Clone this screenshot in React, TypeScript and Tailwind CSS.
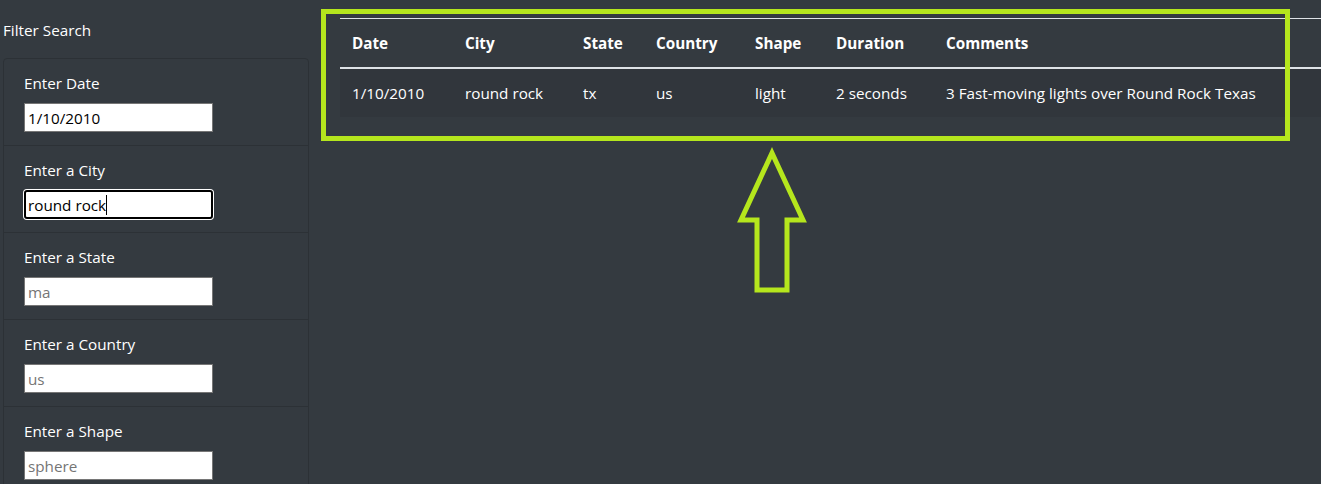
import React from "react";

const font = { fontFamily: '"Open Sans", "Noto Sans", sans-serif' };

const fields = [
  { label: "Enter Date", value: "1/10/2010", placeholder: "" },
  { label: "Enter a City", value: "round rock", placeholder: "", focused: true },
  { label: "Enter a State", value: "", placeholder: "ma" },
  { label: "Enter a Country", value: "", placeholder: "us" },
  { label: "Enter a Shape", value: "", placeholder: "sphere" },
];

const cols = [
  { h: "Date", v: "1/10/2010", w: "w-[113px]" },
  { h: "City", v: "round rock", w: "w-[118px]" },
  { h: "State", v: "tx", w: "w-[73px]" },
  { h: "Country", v: "us", w: "w-[99px]" },
  { h: "Shape", v: "light", w: "w-[81px]" },
  { h: "Duration", v: "2 seconds", w: "w-[110px]" },
  { h: "Comments", v: "3 Fast-moving lights over Round Rock Texas", w: "" },
];

export default function App() {
  return (
    <div
      className="relative w-[1321px] h-[484px] overflow-hidden bg-[#343a40] text-white text-[15.25px] leading-[24px]"
      style={font}
    >
      <div className="flex">
        {/* Sidebar */}
        <aside className="w-[309px] shrink-0 pl-[3px] pt-[18px]">
          <h5 className="leading-[24px]">Filter Search</h5>
          <ul className="mt-[16px] w-[306px] border border-[#2c3136] rounded-t-[4px]">
            {fields.map((f, i) => (
              <li
                key={f.label}
                className={`px-[20px] pt-[12px] pb-[13px] ${i > 0 ? "border-t border-[#2c3136]" : ""}`}
              >
                <label className="block leading-[24px] mb-[8px]">{f.label}</label>
                {f.focused ? (
                  <div className="w-[189px] h-[29px] bg-white border-2 border-black rounded-[3px] shadow-[0_0_0_1px_#ffffff] flex items-center pl-[2px] text-black text-[15.25px]">
                    <span>{f.value}</span>
                    <span className="inline-block w-[1px] h-[20px] bg-black" />
                  </div>
                ) : (
                  <input
                    readOnly
                    value={f.value}
                    placeholder={f.placeholder}
                    className="block w-[189px] h-[29px] bg-white border border-[#767676] px-[3px] text-black text-[15.25px] placeholder:text-[#757575] outline-none"
                    style={font}
                  />
                )}
              </li>
            ))}
          </ul>
        </aside>

        {/* Main */}
        <main className="pl-[31px] pt-[18px]">
          <table className="w-[1000px] border-collapse">
            <thead>
              <tr className="border-t border-[#dee2e6]">
                {cols.map((c) => (
                  <th
                    key={c.h}
                    className={`${c.w} text-left font-bold px-[12px] py-[12px] leading-[24px] border-b-2 border-[#dee2e6]`}
                  >
                    {c.h}
                  </th>
                ))}
              </tr>
            </thead>
            <tbody>
              <tr className="bg-[#31363c]">
                {cols.map((c) => (
                  <td key={c.h} className="px-[12px] py-[12px] leading-[24px] whitespace-nowrap">
                    {c.v}
                  </td>
                ))}
              </tr>
            </tbody>
          </table>
        </main>
      </div>

      {/* Annotation: highlight box */}
      <div className="absolute left-[321px] top-[9px] w-[969px] h-[132px] border-[5px] border-[#b5e61d] pointer-events-none" />

      {/* Annotation: arrow */}
      <svg
        className="absolute left-0 top-0 pointer-events-none"
        width="1321"
        height="484"
        viewBox="0 0 1321 484"
      >
        <polygon
          points="772,153 803,220 787,220 787,290 757,290 757,220 741,220"
          fill="none"
          stroke="#b5e61d"
          strokeWidth="5"
          strokeLinejoin="miter"
        />
      </svg>
    </div>
  );
}
